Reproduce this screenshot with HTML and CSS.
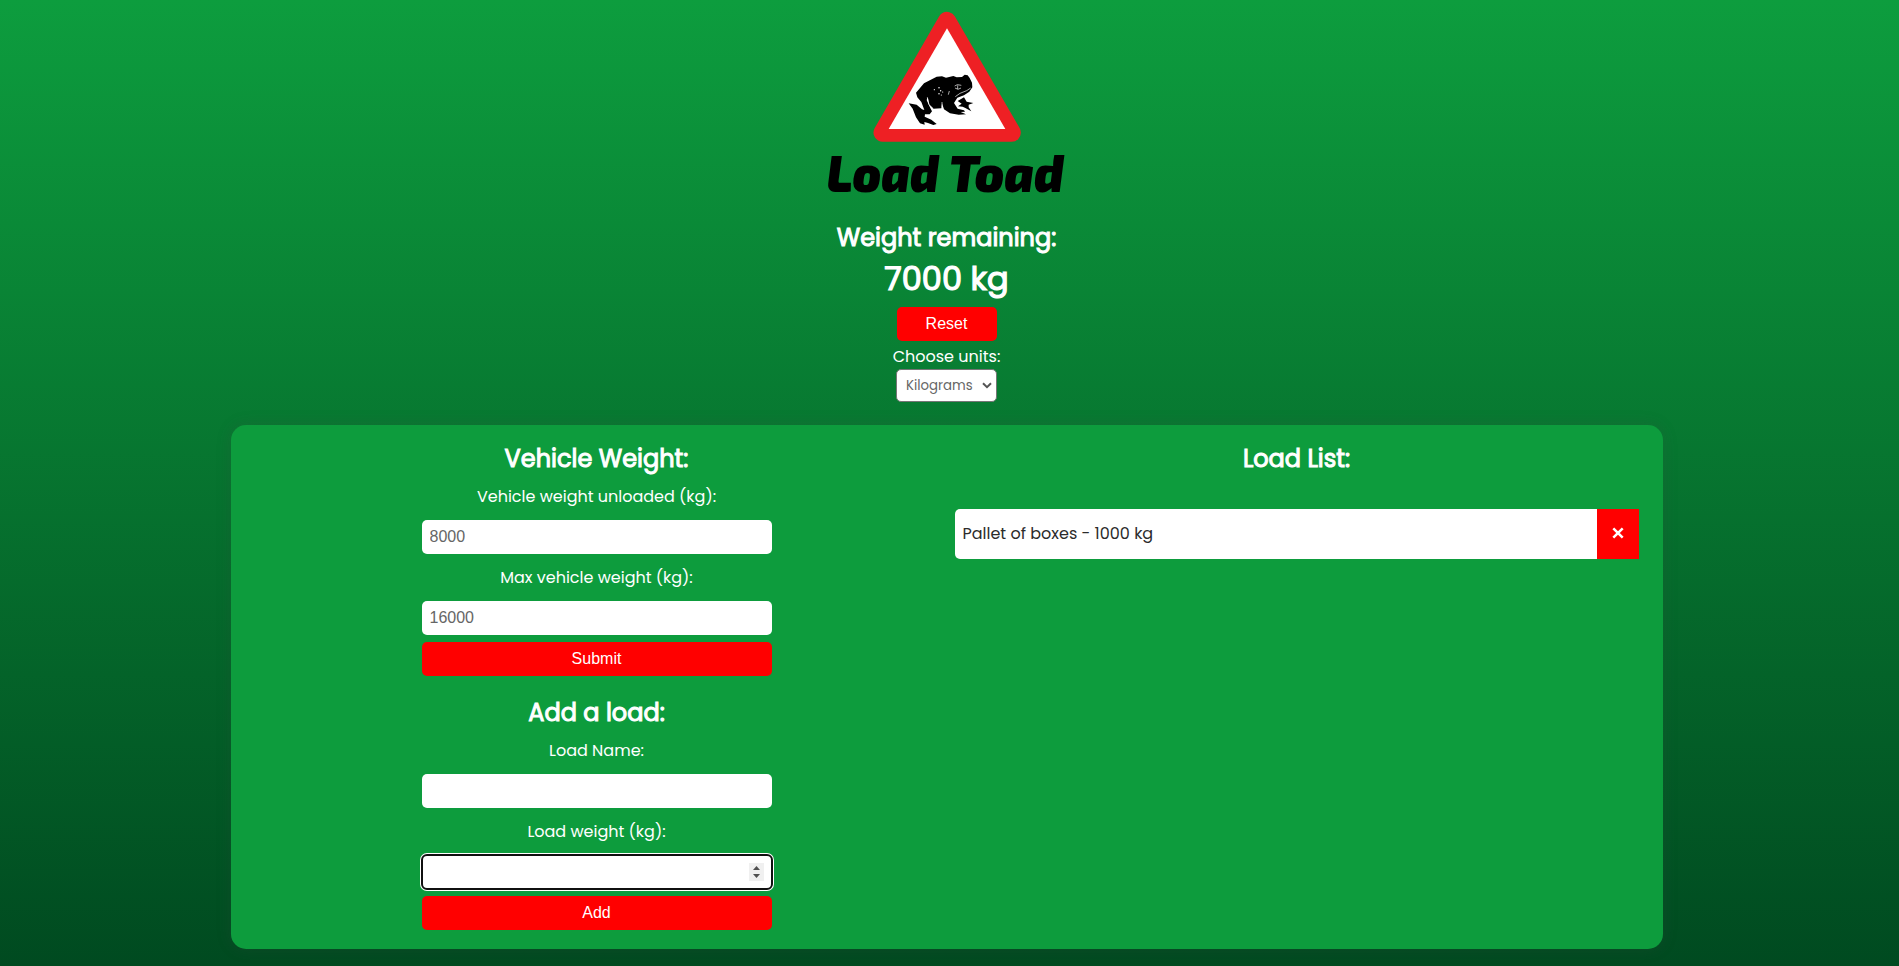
FILE: index.html
```html
<!DOCTYPE html>
<html lang="en">
<head>
<meta charset="utf-8">
<title>Load Toad</title>
<link rel="stylesheet" href="styles.css">
</head>
<body>
<header class="top">
  <svg class="logo" viewBox="-9 0 780 630" role="img" aria-label="Load Toad">
    <path d="M381 63L188 398H575Z" fill="#ee2024" stroke="#ee2024" stroke-width="55" stroke-linejoin="round"/>
    <path d="M381 85L206 387H556Z" fill="#fff"/>
    <path d="M288 278L312 250L350 230L366 229L378 233L400 228L410 232L426 231L434 224L443 226L449 234L456 248L457 262L448 275L432 286L412 293L402 309L413 326L432 331L435 335L422 336L438 343L416 344L390 340L372 328L366 310L364 325L340 326L328 314L323 292L320 300L328 318L336 334L329 343L315 343L314 350L334 359L350 372L340 375L324 369L313 366L314 374L300 370L288 352L278 326L266 310L290 314L306 328L313 330L304 306L292 292Z" fill="#000"/>
    <path d="M413 303L432 292L440 305L460 309L446 314L446 322L454 334L436 324L428 320L414 319L425 311Z" fill="#000"/>
    <path d="M406 290L420 280L440 272L452 264M404 258L412 254L424 256M405 264L414 268L423 264M413 256V267M385 284L388 273M322 292L327 314L340 326M366 306V322" fill="none" stroke="#fff" stroke-width="2"/>
    <g fill="#fff"><circle cx="343" cy="269" r="1.8"/><circle cx="357" cy="263" r="2.2"/><circle cx="362" cy="272" r="2.2"/><circle cx="357" cy="281" r="2.2"/><circle cx="368" cy="276" r="1.8"/><circle cx="364" cy="285" r="1.8"/></g>
    <text class="wordmark" x="20" y="577" textLength="337" lengthAdjust="spacingAndGlyphs">Load</text>
    <text class="wordmark" x="387" y="577" textLength="344" lengthAdjust="spacingAndGlyphs">Toad</text>
  </svg>
  <h2 class="heading remaining">Weight remaining:</h2>
  <p class="total">7000 kg</p>
  <button class="button reset">Reset</button>
  <label class="units-label" for="units">Choose units:</label>
  <div class="select-wrap">
    <select class="units" id="units"><option>Kilograms</option></select>
    <svg class="chevron" viewBox="0 0 10 7"><path d="M1 1.3L5 5.2L9 1.3" fill="none" stroke="#555" stroke-width="2"/></svg>
  </div>
</header>
<main class="card">
  <section class="forms">
    <form class="form">
      <h2 class="heading vehicle">Vehicle Weight:</h2>
      <label class="label unloaded" for="unloaded">Vehicle weight unloaded (kg):</label>
      <input class="field" id="unloaded" value="8000">
      <label class="label max" for="max">Max vehicle weight (kg):</label>
      <input class="field" id="max" value="16000">
      <button class="button" type="button">Submit</button>
    </form>
    <form class="form">
      <h2 class="heading add">Add a load:</h2>
      <label class="label name" for="name">Load Name:</label>
      <input class="field" id="name">
      <label class="label weight" for="weight">Load weight (kg):</label>
      <div class="field focused">
        <svg class="spinner" viewBox="0 0 15 18"><path fill="#f0f0f0" d="M0 0h15v18H0z"/><path fill="#505050" d="M4 7L7.5 3L11 7ZM4 11L7.5 15L11 11Z"/></svg>
      </div>
      <button class="button" type="button">Add</button>
    </form>
  </section>
  <section class="list">
    <h2 class="heading loads">Load List:</h2>
    <div class="item">
      <span class="item-text">Pallet of boxes - 1000 kg</span>
      <button class="remove" aria-label="Remove"><svg width="12" height="12" viewBox="0 0 12 12"><path d="M1.3 1.3L10.7 10.7M10.7 1.3L1.3 10.7" stroke="#fff" stroke-width="2.5"/></svg></button>
    </div>
  </section>
</main>
</body>
</html>
```
FILE: styles.css
```css
* { box-sizing: border-box; }
body {
  margin: 0;
  height: 966px;
  padding-right: 6px;
  overflow: hidden;
  background: linear-gradient(#0d9d3e, #004a20);
  color: #fff;
  font: 16px/24px Poppins, Inter, sans-serif;
}
.top { display: flex; flex-direction: column; align-items: center; height: 425px; }
.logo { display: block; width: 260px; height: 210px; flex: none; }
.wordmark { font: italic 900 158px "Exo 2", Lato, sans-serif; fill: #000; }
.heading {
  margin: 0; font-size: 24px; line-height: 38px; font-weight: 400; white-space: nowrap;
  -webkit-text-stroke: 1px #fff;
}
.remaining { margin-top: 9px; }
.total { margin: 0 0 2px; font-size: 32px; line-height: 44px; font-weight: 400; -webkit-text-stroke: 1.2px #fff; }
.button {
  display: block; width: 100%; height: 34px; padding: 0; border: 0; border-radius: 5px;
  background: #f00; color: #fff; font: 16px "Liberation Sans", Arial, sans-serif;
}
.reset { width: 100px; flex: none; margin-top: 4px; }
.units-label { margin-top: 4px; }
.select-wrap { position: relative; width: 101px; height: 33px; }
.units {
  appearance: none; display: block; width: 101px; height: 33px; padding: 0 9px; border: 1px solid #767676;
  border-radius: 5px; background: #fff; color: #666; font: 13.3px Poppins, Inter, sans-serif;
}
.chevron { position: absolute; right: 5px; top: 13px; width: 10px; height: 7px; }
.card {
  display: flex; width: 1432px; height: 524px; margin: 0 auto; padding: 15px 24px 0; border-radius: 15px;
  background: #0d9c3d; box-shadow: 0 0 15px rgba(72, 72, 72, .2);
}
.forms { width: 684px; display: flex; flex-direction: column; align-items: center; gap: 18px; }
.form { width: 350px; display: flex; flex-direction: column; align-items: center; }
.label { line-height: 24px; margin: 7px 0 11px; white-space: nowrap; }
.field {
  display: block; width: 350px; height: 34px; padding: 0 8px; border: 0; border-radius: 5px;
  background: #fff; color: #666; font: 16px "Liberation Sans", Arial, sans-serif;
}
.field + .label { margin: 12px 0 11px; }
.field + .button { margin-top: 7px; }
.focused {
  display: flex; align-items: center; justify-content: flex-end;
  outline: 2px solid #101010; outline-offset: -1px; box-shadow: 0 0 0 2px #fff;
}
.spinner { width: 15px; height: 18px; }
.list { flex: 1; margin-left: 16px; display: flex; flex-direction: column; align-items: center; }
.item { display: flex; width: 684px; height: 50px; margin-top: 31px; background: #fff; border-radius: 5px 0 0 5px; color: #2b2b2b; }
.item-text { flex: 1; padding-left: 8px; line-height: 49px; }
.remove { display: flex; align-items: center; justify-content: center; width: 42px; padding: 0 0 2px; border: 0; background: #f00; }
```
